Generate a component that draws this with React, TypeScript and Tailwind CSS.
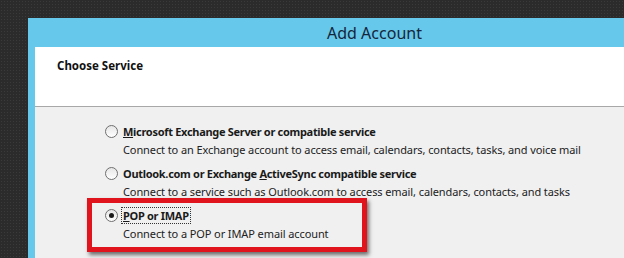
const font = { fontFamily: '"Noto Sans", "Open Sans", sans-serif' };

type Option = {
    key: string;
    before: string;
    mnemonic: string;
    after: string;
    desc: string;
    checked?: boolean;
};

const options: Option[] = [
    {
        key: 'exchange',
        before: '',
        mnemonic: 'M',
        after: 'icrosoft Exchange Server or compatible service',
        desc: 'Connect to an Exchange account to access email, calendars, contacts, tasks, and voice mail',
    },
    {
        key: 'outlook',
        before: 'Outlook.com or Exchange ',
        mnemonic: 'A',
        after: 'ctiveSync compatible service',
        desc: 'Connect to a service such as Outlook.com to access email, calendars, contacts, and tasks',
    },
    {
        key: 'pop',
        before: '',
        mnemonic: 'P',
        after: 'OP or IMAP',
        desc: 'Connect to a POP or IMAP email account',
        checked: true,
    },
];

const Radio = ({ checked }: { checked?: boolean }) => (
    <span className="w-[13px] h-[13px] rounded-full border border-[#6f6f6f] bg-gradient-to-b from-[#e6e6e6] to-white flex items-center justify-center shrink-0">
        {checked && <span className="w-[5px] h-[5px] rounded-full bg-[#1a1a1a]" />}
    </span>
);

const ServiceOption = ({ opt }: { opt: Option }) => (
    <div className="mb-[4px]">
        <div className="h-[19px] flex items-center gap-[4px]">
            <Radio checked={opt.checked} />
            <span
                className={
                    'font-bold text-[11px] tracking-[-0.3px] text-[#1a1a1a] leading-[15px] px-[1px] ' +
                    (opt.checked ? 'outline-1 outline-dotted outline-[#333]' : 'outline-0')
                }
            >
                {opt.before}
                <span className="underline">{opt.mnemonic}</span>
                {opt.after}
            </span>
        </div>
        <div className="h-[19px] flex items-center pl-[18px] text-[11px] tracking-[-0.1px] text-[#222] whitespace-nowrap">
            {opt.desc}
        </div>
    </div>
);

const App: React.FC = () => {
    return (
        <div
            className="w-[624px] h-[258px] overflow-hidden bg-[#2b2b2b] bg-[radial-gradient(#3a3a3a_1px,transparent_1px)] bg-[length:3px_3px] pt-[18px] pl-[28px] relative"
            style={font}
        >
            <div className="w-[620px] h-[240px] bg-[#66c8ea] pl-[7px] flex flex-col">
                <div className="h-[29px] flex items-center justify-center pl-[66px] text-[16px] text-[#15263a]">
                    Add Account
                </div>
                <div className="flex-1 bg-white flex flex-col">
                    <div className="h-[60px] border-b border-[#a8a8a8] pl-[22px] pt-[10px] text-[11.5px] font-bold text-[#111]">
                        Choose Service
                    </div>
                    <div className="flex-1 bg-[#f0f0f0] pl-[70px] pt-[15px]">
                        {options.map(opt => (
                            <ServiceOption key={opt.key} opt={opt} />
                        ))}
                    </div>
                </div>
            </div>

            {/* red highlight box drawn over the dialog */}
            <div className="absolute left-[87px] top-[198px] w-[280px] h-[54px] border-[5px] border-[#e0141c] shadow-[2px_3px_4px_rgba(0,0,0,0.55)]" />
        </div>
    );
};

export default App;
